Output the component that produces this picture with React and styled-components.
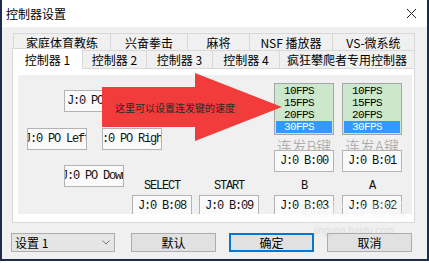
import React from "react";
import styled, { createGlobalStyle } from "styled-components";

const Global = createGlobalStyle`
  html, body { margin: 0; padding: 0; background: #fff; }
  body { font-family: "Noto Sans CJK SC", "Liberation Sans", sans-serif; }
  * { box-sizing: border-box; }
`;

const CJK = `"Noto Sans CJK SC", "Liberation Sans", sans-serif`;
const MONO = `"Liberation Mono", "Noto Sans CJK SC", monospace`;

const Screen = styled.div`
  position: relative;
  width: 429px;
  height: 263px;
  overflow: hidden;
  background: #fff;
`;

const Window = styled.div`
  width: 429px;
  height: 261px;
  border-left: 2px solid #1d2c48;
  border-right: 2px solid #1d2c48;
  border-bottom: 2px solid #1d2c48;
  background: #f0f0f0;
  display: flex;
  flex-direction: column;
`;

const TitleBar = styled.div`
  height: 27px;
  background: #fff;
  display: flex;
  align-items: center;
  justify-content: space-between;
  padding: 0 10px 0 4px;
  font: 12px ${CJK};
  color: #000;
`;

const Body = styled.div`
  flex: 1;
  display: flex;
  flex-direction: column;
  padding: 6px 12px 0 10px;
`;

const TabRow = styled.div`
  display: flex;
  align-items: flex-end;
  height: ${(p) => p.$h}px;
  margin-left: ${(p) => p.$indent || 0}px;
`;

const Tab = styled.div`
  position: relative;
  z-index: ${(p) => (p.$active ? 2 : 1)};
  width: ${(p) => p.$w}px;
  height: ${(p) => (p.$active ? p.$h + 3 : p.$h)}px;
  margin-bottom: ${(p) => (p.$active ? -1 : 0)}px;
  border: 1px solid #d9d9d9;
  border-bottom: none;
  background: ${(p) => (p.$active ? "#fff" : "#f0f0f0")};
  display: flex;
  align-items: center;
  justify-content: center;
  font: 12px ${CJK};
  color: #000;
  white-space: nowrap;
  & + & { margin-left: -1px; }
`;

const Panel = styled.div`
  width: 403px;
  height: 155px;
  border: 1px solid #d9d9d9;
  background: #fff;
  padding: 6px 2px 8px 5px;
  display: flex;
`;

const Inner = styled.div`
  flex: 1;
  background: #f0f0f0;
  display: flex;
  overflow: hidden;
`;

const LeftSection = styled.div`
  width: 256px;
  padding: 15px 0 0 9px;
  display: flex;
  flex-direction: column;
`;

const PadRow = styled.div`
  display: flex;
  align-items: flex-start;
  gap: ${(p) => p.$gap || 0}px;
  margin-top: ${(p) => p.$top || 0}px;
  padding-left: ${(p) => p.$indent || 0}px;
`;

const KeyBox = styled.div`
  width: 60px;
  height: 22px;
  flex: none;
  border: 1px solid #b3b3b3;
  background: #fafafa;
  display: flex;
  align-items: center;
  justify-content: center;
  overflow: hidden;
  white-space: nowrap;
  font: 12px ${MONO};
  letter-spacing: -1.2px;
  color: #111;
`;

const KeyCol = styled.div`
  display: flex;
  flex-direction: column;
  align-items: center;
  margin-top: ${(p) => p.$top || 0}px;
  gap: 2px;
`;

const KeyLabel = styled.div`
  height: 14px;
  line-height: 14px;
  font: 12px ${MONO};
  letter-spacing: -1.2px;
  color: #111;
`;

const SelectGroup = styled.div`
  display: flex;
  gap: 7px;
  margin-left: 8px;
  margin-top: 14px;
`;

const RightSection = styled.div`
  display: flex;
  gap: 8px;
  padding-top: 8px;
`;

const RapidCol = styled.div`
  width: 60px;
  display: flex;
  flex-direction: column;
  align-items: center;
`;

const ListBox = styled.div`
  width: 60px;
  height: 52px;
  border: 1px solid #a5a5a5;
  background: #cce8cc;
  padding: 1px;
  display: flex;
  flex-direction: column;
`;

const ListItem = styled.div`
  height: 12px;
  line-height: 12px;
  padding-left: 8px;
  font: 11px ${MONO};
  letter-spacing: -0.6px;
  background: ${(p) => (p.$sel ? "#3399ff" : "transparent")};
  color: ${(p) => (p.$sel ? "#fff" : "#000")};
`;

const RapidCaption = styled.div`
  height: 15px;
  line-height: 15px;
  font: 300 15px ${CJK};
  color: #a3a3a3;
  white-space: nowrap;
`;

const BottomRow = styled.div`
  display: flex;
  align-items: center;
  margin-top: 10px;
  margin-left: -1px;
`;

const Combo = styled.div`
  width: 104px;
  height: 19px;
  border: 1px solid #adadad;
  background: #e5e5e5;
  display: flex;
  align-items: center;
  justify-content: space-between;
  padding: 0 4px 0 3px;
  margin-right: 16px;
  font: 12px ${CJK};
  color: #000;
`;

const Button = styled.div`
  width: 85px;
  height: 19px;
  border: ${(p) => (p.$default ? "2px solid #0078d7" : "1px solid #adadad")};
  background: #e1e1e1;
  display: flex;
  align-items: center;
  justify-content: center;
  font: 12px ${CJK};
  color: #000;
  & + & { margin-left: 13px; }
`;

const ArrowLayer = styled.div`
  position: absolute;
  left: 100px;
  top: 70px;
  width: 186px;
  height: 74px;
`;

const ArrowText = styled.div`
  position: absolute;
  left: 15px;
  top: 30px;
  font: 10px ${CJK};
  color: #2a2a2a;
  white-space: nowrap;
`;

const Watermark = styled.div`
  position: absolute;
  left: 300px;
  top: 196px;
  display: flex;
  flex-direction: column;
  align-items: center;
  pointer-events: none;
  opacity: 0.55;
`;

const WmLogo = styled.div`
  font: bold 22px "Liberation Sans", sans-serif;
  color: rgba(255, 255, 255, 0.75);
  text-shadow: 0 0 1px rgba(0, 0, 0, 0.12);
  letter-spacing: 1px;
  & span { font: bold 18px ${CJK}; margin-left: 4px; }
`;

const WmUrl = styled.div`
  font: 10px "Liberation Sans", sans-serif;
  color: rgba(170, 170, 170, 0.5);
  margin-top: 2px;
`;

const row1 = [
  ["家庭体育教练", 98],
  ["兴奋拳击", 78],
  ["麻将", 63],
  ["NSF 播放器", 84],
  ["VS-微系统", 83],
];
const row2 = [
  ["控制器 1", 71],
  ["控制器 2", 65],
  ["控制器 3", 67],
  ["控制器 4", 68],
  ["疯狂攀爬者专用控制器", 136],
];

const fps = ["10FPS", "15FPS", "20FPS", "30FPS"];

function Rapid({ caption, box, label, btn }) {
  return (
    <RapidCol>
      <ListBox>
        {fps.map((f, i) => (
          <ListItem key={f} $sel={i === 3}>{f}</ListItem>
        ))}
      </ListBox>
      <RapidCaption>{caption}</RapidCaption>
      <KeyBox>{box}</KeyBox>
      <KeyCol $top={7}>
        <KeyLabel>{label}</KeyLabel>
        <KeyBox>{btn}</KeyBox>
      </KeyCol>
    </RapidCol>
  );
}

export default function App() {
  return (
    <>
      <Global />
      <Screen>
        <Window>
          <TitleBar>
            <span>控制器设置</span>
            <svg width="11" height="11" viewBox="0 0 11 11">
              <path d="M1 1 L10 10 M10 1 L1 10" stroke="#222" strokeWidth="1" />
            </svg>
          </TitleBar>
          <Body>
            <TabRow $h={17} $indent={1}>
              {row1.map(([t, w]) => (
                <Tab key={t} $w={w} $h={17}>{t}</Tab>
              ))}
            </TabRow>
            <TabRow $h={18}>
              {row2.map(([t, w], i) => (
                <Tab key={t} $w={w} $h={18} $active={i === 0}>{t}</Tab>
              ))}
            </TabRow>
            <Panel>
              <Inner>
                <LeftSection>
                  <PadRow $indent={37}>
                    <KeyBox>J:0 PO Up</KeyBox>
                  </PadRow>
                  <PadRow $top={16} $gap={15}>
                    <KeyBox>J:0 PO Left</KeyBox>
                    <KeyBox>J:0 PO Right</KeyBox>
                  </PadRow>
                  <PadRow $top={15} $indent={37}>
                    <KeyBox>J:0 PO Down</KeyBox>
                    <SelectGroup>
                      <KeyCol>
                        <KeyLabel>SELECT</KeyLabel>
                        <KeyBox>J:0 B:08</KeyBox>
                      </KeyCol>
                      <KeyCol>
                        <KeyLabel>START</KeyLabel>
                        <KeyBox>J:0 B:09</KeyBox>
                      </KeyCol>
                    </SelectGroup>
                  </PadRow>
                </LeftSection>
                <RightSection>
                  <Rapid caption="连发B键" box="J:0 B:00" label="B" btn="J:0 B:03" />
                  <Rapid caption="连发A键" box="J:0 B:01" label="A" btn="J:0 B:02" />
                </RightSection>
              </Inner>
            </Panel>
            <BottomRow>
              <Combo>
                <span>设置 1</span>
                <svg width="8" height="5" viewBox="0 0 8 5">
                  <path d="M0.5 0.5 L4 4 L7.5 0.5" stroke="#777" strokeWidth="1" fill="none" />
                </svg>
              </Combo>
              <Button>默认</Button>
              <Button $default>确定</Button>
              <Button>取消</Button>
            </BottomRow>
          </Body>
        </Window>
        <ArrowLayer>
          <svg width="186" height="74" viewBox="0 0 186 74">
            <polygon points="2,17 95,17 95,3 182,37 95,71 95,57 2,57" fill="#f23b3b" />
          </svg>
          <ArrowText>这里可以设置连发键的速度</ArrowText>
        </ArrowLayer>
        <Watermark>
          <WmLogo>Baidu<span>经验</span></WmLogo>
          <WmUrl>jingyan.baidu.com</WmUrl>
        </Watermark>
      </Screen>
    </>
  );
}
